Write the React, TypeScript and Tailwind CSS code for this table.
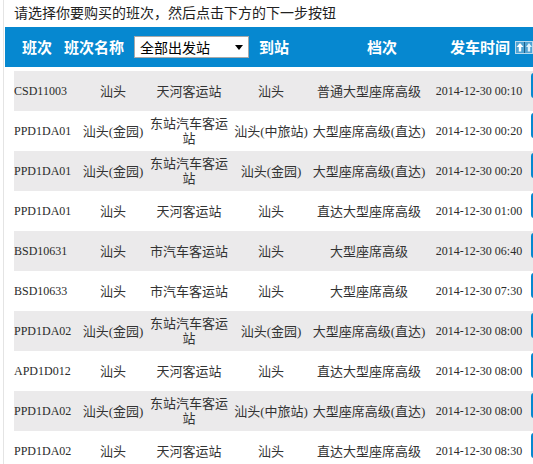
import React from "react";

type Trip = {
  code: string;
  from: string;
  station: string;
  to: string;
  grade: string;
  time: string;
};

const trips: Trip[] = [
  { code: "CSD11003", from: "汕头", station: "天河客运站", to: "汕头", grade: "普通大型座席高级", time: "2014-12-30 00:10" },
  { code: "PPD1DA01", from: "汕头(金园)", station: "东站汽车客运站", to: "汕头(中旅站)", grade: "大型座席高级(直达)", time: "2014-12-30 00:20" },
  { code: "PPD1DA01", from: "汕头(金园)", station: "东站汽车客运站", to: "汕头(金园)", grade: "大型座席高级(直达)", time: "2014-12-30 00:20" },
  { code: "PPD1DA01", from: "汕头", station: "天河客运站", to: "汕头", grade: "直达大型座席高级", time: "2014-12-30 01:00" },
  { code: "BSD10631", from: "汕头", station: "市汽车客运站", to: "汕头", grade: "大型座席高级", time: "2014-12-30 06:40" },
  { code: "BSD10633", from: "汕头", station: "市汽车客运站", to: "汕头", grade: "大型座席高级", time: "2014-12-30 07:30" },
  { code: "PPD1DA02", from: "汕头(金园)", station: "东站汽车客运站", to: "汕头(金园)", grade: "大型座席高级(直达)", time: "2014-12-30 08:00" },
  { code: "APD1D012", from: "汕头", station: "天河客运站", to: "汕头", grade: "直达大型座席高级", time: "2014-12-30 08:00" },
  { code: "PPD1DA02", from: "汕头(金园)", station: "东站汽车客运站", to: "汕头(中旅站)", grade: "大型座席高级(直达)", time: "2014-12-30 08:00" },
  { code: "PPD1DA02", from: "汕头", station: "天河客运站", to: "汕头", grade: "直达大型座席高级", time: "2014-12-30 08:30" },
];

const cjk = "font-['Liberation_Serif','Noto_Sans_CJK_SC',serif]";

// 排序小图标
function SortIcon() {
  return (
    <svg width="18" height="13" viewBox="0 0 18 13" className="shrink-0">
      <rect x="0" y="0" width="18" height="13" fill="#b9d9ec" />
      <rect x="1" y="1" width="8" height="11" fill="#4fa3d3" />
      <path d="M5 2 L8.5 6 L6.2 6 L6.2 10.5 L3.8 10.5 L3.8 6 L1.5 6 Z" fill="#ffffff" />
      <rect x="9" y="1" width="1" height="11" fill="#1f5f88" />
      <rect x="10" y="1" width="7" height="11" fill="#4fa3d3" />
      <path d="M14 2 L17 6 L15.2 6 L15.2 10.5 L12.8 10.5 L12.8 6 L11 6 Z" fill="#dff0fa" />
    </svg>
  );
}

export default function App() {
  return (
    <div className="w-[533px] h-[464px] overflow-hidden bg-white">
      <div className="ml-[3px] border-l border-[#e4e4e4] min-h-[464px]">
        {/* 提示 */}
        <div className="h-[27px] pl-[10px] flex items-start pt-[3px] text-[14px] leading-[18px] text-[#222] font-['Noto_Sans_CJK_SC',sans-serif]">
          请选择你要购买的班次，然后点击下方的下一步按钮
        </div>

        {/* 表头 */}
        <div className="ml-[1px] h-[40px] bg-[#0688d0] flex items-center text-white font-bold text-[15px] font-['Noto_Sans_CJK_SC',sans-serif] whitespace-nowrap">
          <span className="ml-[17px]">班次</span>
          <span className="ml-[12px]">班次名称</span>
          <div className="ml-[10px] w-[118px] h-[22px] bg-white border border-[#a9a9a9] flex items-center justify-between px-[5px] text-[14px] font-normal text-black">
            <span>全部出发站</span>
            <svg width="8" height="5" viewBox="0 0 8 5">
              <path d="M0 0 L8 0 L4 5 Z" fill="#000" />
            </svg>
          </div>
          <span className="ml-[10px]">到站</span>
          <span className="ml-[78px]">档次</span>
          <span className="ml-[53px]">发车时间</span>
          <span className="ml-[5px] flex">
            <SortIcon />
          </span>
        </div>

        {/* 列表 */}
        <div className="mt-[4px] ml-[10px]">
          {trips.map((t, i) => (
            <div
              key={i}
              className={`h-[40px] flex items-center text-[13px] leading-[15px] text-[#333] ${cjk} ${
                i % 2 === 0 ? "bg-[#ebeaeb]" : "bg-white"
              }`}
            >
              <div className="w-[66px] shrink-0 text-[12px] text-[#2a2a2a]">{t.code}</div>
              <div className="w-[66px] shrink-0 text-center">{t.from}</div>
              <div className="w-[86px] shrink-0 px-[3px] text-center">{t.station}</div>
              <div className="w-[78px] shrink-0 text-center whitespace-nowrap">{t.to}</div>
              <div className="w-[118px] shrink-0 text-center whitespace-nowrap">{t.grade}</div>
              <div className="w-[102px] shrink-0 text-center text-[12px] text-[#2a2a2a] whitespace-nowrap">{t.time}</div>
              <div className="self-start mt-[2px] ml-[1px] w-[20px] h-[25px] shrink-0 rounded-[3px] bg-[#0688d0]" />
            </div>
          ))}
        </div>
      </div>
    </div>
  );
}
